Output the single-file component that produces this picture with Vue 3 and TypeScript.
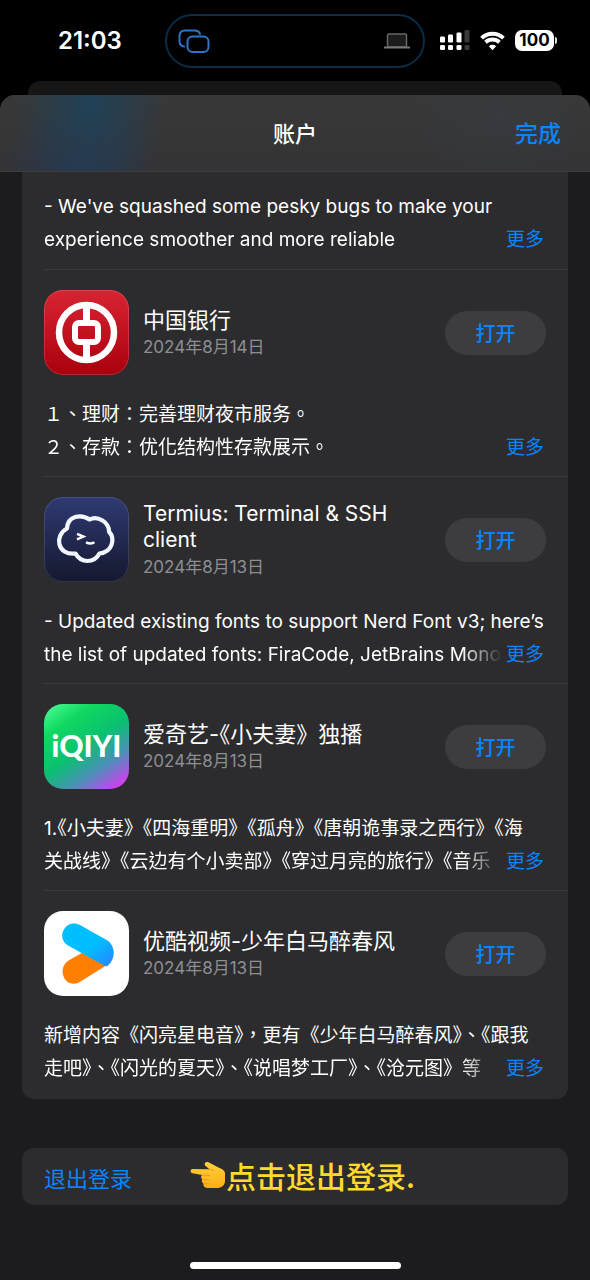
<script setup lang="ts">
interface AppUpdate {
  id: string
  name: string
  date: string
  notes: string[]
  latin?: boolean
}

const previousNotes: string[] = [
  "- We've squashed some pesky bugs to make your",
  'experience smoother and more reliable',
]

const updates: AppUpdate[] = [
  {
    id: 'boc',
    name: '中国银行',
    date: '2024年8月14日',
    notes: ['１、理财：完善理财夜市服务。', '２、存款：优化结构性存款展示。'],
  },
  {
    id: 'termius',
    name: 'Termius: Terminal & SSH client',
    date: '2024年8月13日',
    latin: true,
    notes: [
      '- Updated existing fonts to support Nerd Font v3; here’s',
      'the list of updated fonts: FiraCode, JetBrains Mono',
    ],
  },
  {
    id: 'iqiyi',
    name: '爱奇艺-《小夫妻》独播',
    date: '2024年8月13日',
    notes: [
      '1.《小夫妻》《四海重明》《孤舟》《唐朝诡事录之西行》《海',
      '关战线》《云边有个小卖部》《穿过月亮的旅行》《音乐',
    ],
  },
  {
    id: 'youku',
    name: '优酷视频-少年白马醉春风',
    date: '2024年8月13日',
    notes: [
      '新增内容《闪亮星电音》，更有《少年白马醉春风》、《跟我',
      '走吧》、《闪光的夏天》、《说唱梦工厂》、《沧元图》等',
    ],
  },
]

// Isolates an opening book-title mark that follows ASCII punctuation,
// so that it can be set at half width. Odd parts are the marks.
function parts(text: string): string[] {
  return text.split(/(?<=[-.])(《)/)
}
</script>

<template>
  <div class="screen">
    <header class="status">
      <time class="clock">21:03</time>
      <div class="island">
        <svg class="mirror" viewBox="0 0 32 24" aria-hidden="true">
          <path d="M6 17.500 C2.500 17 1.500 15 1.500 12 V7 C1.500 3 3.500 1.500 7 1.500 H16 C19.500 1.500 21.500 2.500 22 5" />
          <rect x="9.500" y="7.500" width="21" height="15.500" rx="5" />
        </svg>
        <svg class="laptop" viewBox="0 0 26 16" aria-hidden="true">
          <rect x="3.500" y="1" width="19" height="13" rx="1" fill="#1c1c1c" stroke="#666" stroke-width="1.500" />
          <path d="M0 14.500 H26" stroke="#777" stroke-width="2" />
        </svg>
      </div>
      <div class="indicators">
        <svg class="signal" viewBox="0 0 30 21" aria-hidden="true">
          <g fill="#fff">
            <rect x="0" y="6.500" width="5" height="6" rx="1.300" />
            <rect x="8" y="4.500" width="5" height="8" rx="1.300" />
            <rect x="16.500" y="2.500" width="5" height="10" rx="1.300" />
            <rect x="0" y="15" width="5" height="5" rx="1.300" />
            <rect x="8" y="15" width="5" height="5" rx="1.300" />
            <rect x="16.500" y="15" width="5" height="5" rx="1.300" />
          </g>
          <g fill="#3a3a3a">
            <rect x="24.500" y="0" width="5" height="12.500" rx="1.300" />
            <rect x="24.500" y="15" width="5" height="5" rx="1.300" />
          </g>
        </svg>
        <svg class="wifi" viewBox="0 0 26 20" aria-hidden="true">
          <path d="M1.600 7 A16.500 16.500 0 0 1 24.400 7" />
          <path d="M5.800 11.300 A10.500 10.500 0 0 1 20.200 11.300" />
          <path class="dot" d="M13 19.500 L9.200 15.500 A5.500 5.500 0 0 1 16.800 15.500 Z" />
        </svg>
        <div class="battery">
          <span class="level">100</span>
          <span class="cap"></span>
        </div>
      </div>
    </header>

    <div class="behind"></div>

    <main class="sheet">
      <div class="bar">
        <h1>账户</h1>
        <button type="button" class="done">完成</button>
      </div>

      <ul class="card list">
        <li class="row lead">
          <div class="notes">
            <p v-for="line in previousNotes" :key="line">{{ line }}</p>
            <button type="button" class="more">更多</button>
          </div>
        </li>
        <li v-for="app in updates" :key="app.id" class="row">
          <div class="head">
            <svg v-if="app.id === 'boc'" class="icon" viewBox="0 0 85 85" role="img" aria-label="中国银行">
              <defs>
                <linearGradient id="boc-bg" x1="0" y1="0" x2="0" y2="1">
                  <stop offset="0" stop-color="#d92432" />
                  <stop offset="1" stop-color="#a9000d" />
                </linearGradient>
              </defs>
              <rect width="85" height="85" rx="19" fill="url(#boc-bg)" />
              <rect x=".5" y=".5" width="84" height="84" rx="18.500" fill="none" stroke="#fff" stroke-opacity=".15" />
              <circle cx="42.500" cy="42.500" r="27.500" fill="none" stroke="#fff" stroke-width="6.500" />
              <path d="M42.500 15 V32 M42.500 53 V70" stroke="#fff" stroke-width="7" />
              <rect x="31" y="33" width="23" height="19" rx="4" fill="none" stroke="#fff" stroke-width="6" />
            </svg>
            <svg v-else-if="app.id === 'termius'" class="icon" viewBox="0 0 85 85" role="img" aria-label="Termius">
              <defs>
                <linearGradient id="term-bg" x1="0" y1="0" x2="0" y2="1">
                  <stop offset="0" stop-color="#2f3a73" />
                  <stop offset="1" stop-color="#15182f" />
                </linearGradient>
              </defs>
              <rect width="85" height="85" rx="19" fill="url(#term-bg)" />
              <rect x=".5" y=".5" width="84" height="84" rx="18.500" fill="none" stroke="#fff" stroke-opacity=".12" />
              <path
                d="M23 31.500 C23.500 19 37 16.500 45.500 22.500 C54 18.500 65 25 65 34.500 C71.500 42 68.500 55 55.500 56.500 C50 66.500 37 66.500 31.500 56.500 C13 58.500 10 38.500 23 31.500 Z"
                fill="none" stroke="#f2f7ff" stroke-width="4.200" stroke-linejoin="round"
              />
              <path d="M33 36.800 L39.500 39.600 L33 42.400" fill="none" stroke="#fff" stroke-width="2.400" />
              <path d="M43 45.800 Q46 47.200 49.500 45.800" fill="none" stroke="#fff" stroke-width="2.600" stroke-linecap="round" />
            </svg>
            <svg v-else-if="app.id === 'iqiyi'" class="icon" viewBox="0 0 85 85" role="img" aria-label="iQIYI">
              <defs>
                <linearGradient id="qy-bg" x1=".15" y1="0" x2=".85" y2="1">
                  <stop offset="0" stop-color="#3ff58b" />
                  <stop offset=".2" stop-color="#0fd860" />
                  <stop offset=".5" stop-color="#0ac070" />
                  <stop offset=".75" stop-color="#4c8fb8" />
                  <stop offset="1" stop-color="#d43cf2" />
                </linearGradient>
              </defs>
              <rect width="85" height="85" rx="19" fill="url(#qy-bg)" />
              <text x="42.500" y="53" class="wordmark" text-anchor="middle">iQIYI</text>
            </svg>
            <svg v-else class="icon" viewBox="0 0 85 85" role="img" aria-label="优酷视频">
              <defs>
                <linearGradient id="yk-blue" x1="0" y1="0" x2="1" y2="1">
                  <stop offset=".55" stop-color="#00bfff" />
                  <stop offset="1" stop-color="#2b82ff" />
                </linearGradient>
              </defs>
              <rect width="85" height="85" rx="19" fill="#fff" />
              <path
                d="M24.500 49.500 L45 38 L63 54 L36.500 70.500 C31 74 24 73.500 20.500 67.500 C16.500 60.500 19 53 24.500 49.500 Z"
                fill="#ff8000"
              />
              <path
                d="M36.500 14.200 L63.500 29.500 C71.500 35 72 47.500 64 54.500 C63 55.500 61.500 55.500 60 54.600 L24 34.500 C18 31 16.500 24 20 18.500 C23.500 12 31 11 36.500 14.200 Z"
                fill="url(#yk-blue)"
              />
            </svg>
            <div class="about">
              <h2 :class="{ latin: app.latin }"><span v-for="(part, i) in parts(app.name)" :key="i" :class="{ half: i % 2 }">{{ part }}</span></h2>
              <time class="date">{{ app.date }}</time>
            </div>
            <button type="button" class="open">打开</button>
          </div>
          <div class="notes">
            <p v-for="line in app.notes" :key="line"><span v-for="(part, i) in parts(line)" :key="i" :class="{ half: i % 2 }">{{ part }}</span></p>
            <button type="button" class="more">更多</button>
          </div>
        </li>
      </ul>

      <section class="card signout">
        <button type="button" class="logout">退出登录</button>
        <div class="hint">
          <svg class="hand" viewBox="0 0 36 28" aria-hidden="true">
            <defs>
              <linearGradient id="hand-skin" x1="0" y1="0" x2="0" y2="1">
                <stop offset="0" stop-color="#ffd13a" />
                <stop offset="1" stop-color="#fbae17" />
              </linearGradient>
            </defs>
            <path
              d="M2.500 8 C0 8.200 0 12 2.500 12.300 L12 14 C10.500 15.500 11 17.500 12.300 18.300 C11.300 20 12 22 13.500 22.500 C13 25.500 15 27 18 27 H27 C31 27 35 24.500 35 20 V12.500 C35 9.500 32 8 29 6.800 L18.500 1.300 C15.500 0 13.500 3 15.500 5 L19.500 8.300 Z"
              fill="url(#hand-skin)"
            />
            <path
              d="M12 14 L20 14.600 M12.300 18.300 L19 19 M13.500 22.500 L19 23 M19.500 8.300 L24 9.500"
              fill="none" stroke="#eb9c1c" stroke-width="1" stroke-linecap="round"
            />
          </svg>
          <span>点击退出登录.</span>
        </div>
      </section>

      <div class="home"></div>
    </main>
  </div>
</template>

<style>
body {
  background: #000;
}
</style>

<style scoped>
.screen {
  display: flex;
  flex-direction: column;
  min-height: 100vh;
  background: #000;
  color: #fff;
  font-family: Inter, "Noto Sans CJK TC", sans-serif;
}

h1,
h2,
p,
ul {
  margin: 0;
  padding: 0;
}

button {
  padding: 0;
  border: 0;
  background: none;
  color: #0a84ff;
  font-family: "Noto Sans CJK SC", sans-serif;
  cursor: pointer;
}

.status {
  display: grid;
  grid-template-columns: 1fr 260px 1fr;
  align-items: center;
  height: 81px;
}

.clock {
  padding-left: 58px;
  font-size: 24px;
  font-weight: 600;
}

.island {
  display: flex;
  align-items: center;
  justify-content: space-between;
  box-sizing: border-box;
  height: 54px;
  padding: 0 13px 0 11px;
  border: 2px solid #0a2c47;
  border-radius: 27px;
}

.mirror {
  width: 32px;
  height: 24px;
  fill: none;
  stroke: #2b76c9;
  stroke-width: 2;
  stroke-linecap: round;
}

.laptop {
  width: 26px;
  height: 16px;
}

.indicators {
  display: flex;
  align-items: center;
  gap: 10px;
  padding-left: 15px;
}

.signal {
  width: 30px;
  height: 21px;
}

.wifi {
  width: 25px;
  height: 20px;
  fill: none;
  stroke: #fff;
  stroke-width: 4;
}

.wifi .dot {
  fill: #fff;
  stroke: none;
}

.battery {
  display: flex;
  align-items: center;
  gap: 1px;
}

.level {
  width: 39px;
  border-radius: 7px;
  background: #fff;
  color: #000;
  font-size: 17px;
  font-weight: 700;
  line-height: 21px;
  text-align: center;
}

.cap {
  width: 2px;
  height: 7px;
  border-radius: 0 2px 2px 0;
  background: #ddd;
}

.behind {
  height: 14px;
  margin: 0 28px;
  border-radius: 12px 12px 0 0;
  background: #161616;
}

.sheet {
  display: flex;
  flex: 1;
  flex-direction: column;
  border-radius: 15px 15px 0 0;
  background: #1c1c1e;
  overflow: hidden;
}

.bar {
  display: grid;
  grid-template-columns: 1fr auto 1fr;
  align-items: center;
  box-sizing: border-box;
  height: 77px;
  padding: 0 29px 2px;
  border-bottom: 1px solid #3d3d3f;
  background:
    radial-gradient(ellipse 75px 90px at 90px 10px, #1f4158 0%, #1f41587a 50%, transparent 100%),
    radial-gradient(ellipse 80px 70px at 80px 80px, #20386099 0%, transparent 100%),
    radial-gradient(ellipse 90px 60px at 500px 25px, #363b4299 0%, transparent 100%),
    linear-gradient(#383838, #343436);
}

.bar h1 {
  grid-column: 2;
  font-family: "Noto Sans CJK SC", sans-serif;
  font-size: 22px;
  font-weight: 500;
}

.done {
  justify-self: end;
  font-size: 23px;
  font-weight: 500;
}

.card {
  margin: 0 22px;
  border-radius: 12px;
  background: #2c2c2e;
}

.list {
  border-top-left-radius: 0;
  border-top-right-radius: 0;
  list-style: none;
}

.row {
  margin-left: 22px;
  padding: 20px 22px 12px 0;
  border-bottom: 1px solid #3a3a3c;
}

.row:last-child {
  padding-bottom: 14px;
  border-bottom: 0;
}

.lead {
  padding: 18px 22px 13px 0;
}

.head {
  display: flex;
  align-items: center;
  gap: 14px;
  margin-bottom: 23px;
}

.icon {
  flex: none;
  width: 85px;
  height: 85px;
}

.wordmark {
  fill: #fff;
  font-family: Lato, sans-serif;
  font-size: 30px;
  font-weight: 900;
}

.about {
  flex: 1;
  min-width: 0;
}

.about h2 {
  font-size: 22px;
  font-weight: 400;
  line-height: 26px;
}

.about .latin {
  font-size: 21px;
}

.half {
  font-feature-settings: "halt";
}

.date {
  display: block;
  margin-top: 2px;
  color: #8e8e93;
  font-size: 17px;
  line-height: 24px;
}

.open {
  flex: none;
  width: 101px;
  height: 44px;
  border-radius: 22px;
  background: #3d3d3f;
  font-size: 20px;
  font-weight: 500;
}

.notes {
  display: grid;
  grid-template-columns: 1fr auto;
  column-gap: 4px;
  padding-right: 2px;
  font-size: 19px;
  line-height: 33px;
}

.notes p {
  min-width: 0;
  white-space: nowrap;
}

.notes p:first-child {
  grid-column: 1 / -1;
}

.notes p:nth-child(2) {
  mask-image: linear-gradient(to left, transparent, #000 40px);
}

.more {
  font-family: Inter, "Noto Sans CJK SC", sans-serif;
  font-size: 19px;
  line-height: 33px;
}

.signout {
  display: flex;
  align-items: center;
  gap: 58px;
  height: 57px;
  margin-top: 49px;
  padding: 0 22px;
}

.logout {
  font-family: Inter, "Noto Sans CJK SC", sans-serif;
  font-size: 22px;
}

.hint {
  display: flex;
  align-items: center;
  padding-bottom: 4px;
  color: #ffd92e;
  font-family: "Noto Sans CJK SC", sans-serif;
  font-size: 30px;
  font-weight: 500;
  line-height: 44px;
}

.hand {
  width: 36px;
  height: 28px;
}

.home {
  width: 211px;
  height: 7px;
  margin: auto auto 11px;
  border-radius: 4px;
  background: #fff;
}
</style>
